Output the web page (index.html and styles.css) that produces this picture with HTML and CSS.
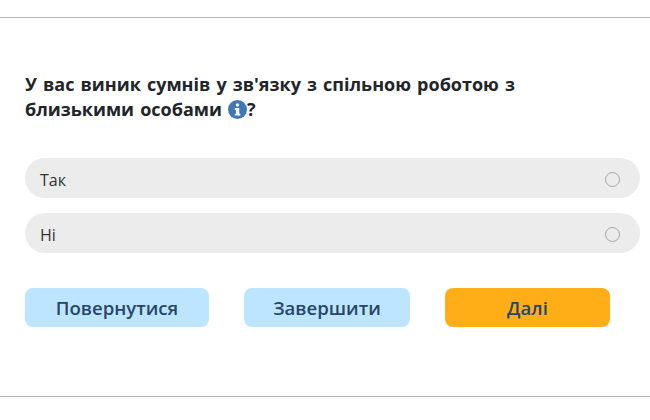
FILE: index.html
```html
<!DOCTYPE html>
<html lang="uk">
<head>
  <meta charset="UTF-8">
  <meta name="viewport" content="width=device-width, initial-scale=1.0">
  <title>Питання</title>
  <link rel="stylesheet" href="styles.css">
</head>
<body>
  <div class="survey">
    <h2 class="question">У вас виник сумнів у зв'язку з спільною роботою з<br>близькими особами <svg class="info" viewBox="0 0 20 20" width="19" height="19"><circle cx="10" cy="10" r="10" fill="#3f78b5"/><rect x="8.4" y="3.8" width="3.2" height="3" rx="0.8" fill="#fff"/><path d="M7.2 8.4h4.6v6h1.2v2H7.2v-2h1.2v-4h-1.2z" fill="#fff"/></svg>?</h2>
    <div class="options">
      <label class="option"><span>Так</span><span class="radio"></span></label>
      <label class="option"><span>Ні</span><span class="radio"></span></label>
    </div>
    <div class="buttons">
      <button class="btn btn-back">Повернутися</button>
      <button class="btn btn-finish">Завершити</button>
      <button class="btn btn-next">Далі</button>
    </div>
  </div>
</body>
</html>
```

FILE: styles.css
```css
/* Basic styling */
body {
  font-family: "Open Sans", sans-serif;
  margin: 0;
  padding: 0;
  background-color: #fff;
}
.survey {
  margin-top: 17px;
  height: 380px;
  border-top: 1px solid #b5b5b5;
  border-bottom: 1px solid #b5b5b5;
  padding: 54px 10px 0 25px;
  box-sizing: border-box;
}
.question {
  margin: 0;
  font-size: 18px;
  line-height: 25px;
  word-spacing: 1.4px;
  font-weight: 700;
  color: #212529;
}
.info {
  vertical-align: -3px;
}
.options {
  margin-top: 36px;
  display: flex;
  flex-direction: column;
  gap: 15px;
}
.option {
  height: 40px;
  background-color: #ececec;
  border-radius: 20px;
  padding: 3px 20px 0 15px;
  box-sizing: border-box;
  display: flex;
  align-items: center;
  justify-content: space-between;
  font-size: 16px;
  color: #333;
}
.radio {
  width: 13px;
  height: 13px;
  border: 1px solid #a8a3a3;
  border-radius: 50%;
}
.buttons {
  margin-top: 35px;
  display: flex;
  gap: 35px;
}
.btn {
  height: 39px;
  border: none;
  border-radius: 8px;
  font-family: inherit;
  font-size: 18.6px;
  font-weight: 600;
  color: #26466a;
  background-color: #bee5ff;
}
.btn-back {
  width: 184px;
}
.btn-finish {
  width: 166px;
}
.btn-next {
  width: 165px;
  background-color: #ffae18;
}
```
